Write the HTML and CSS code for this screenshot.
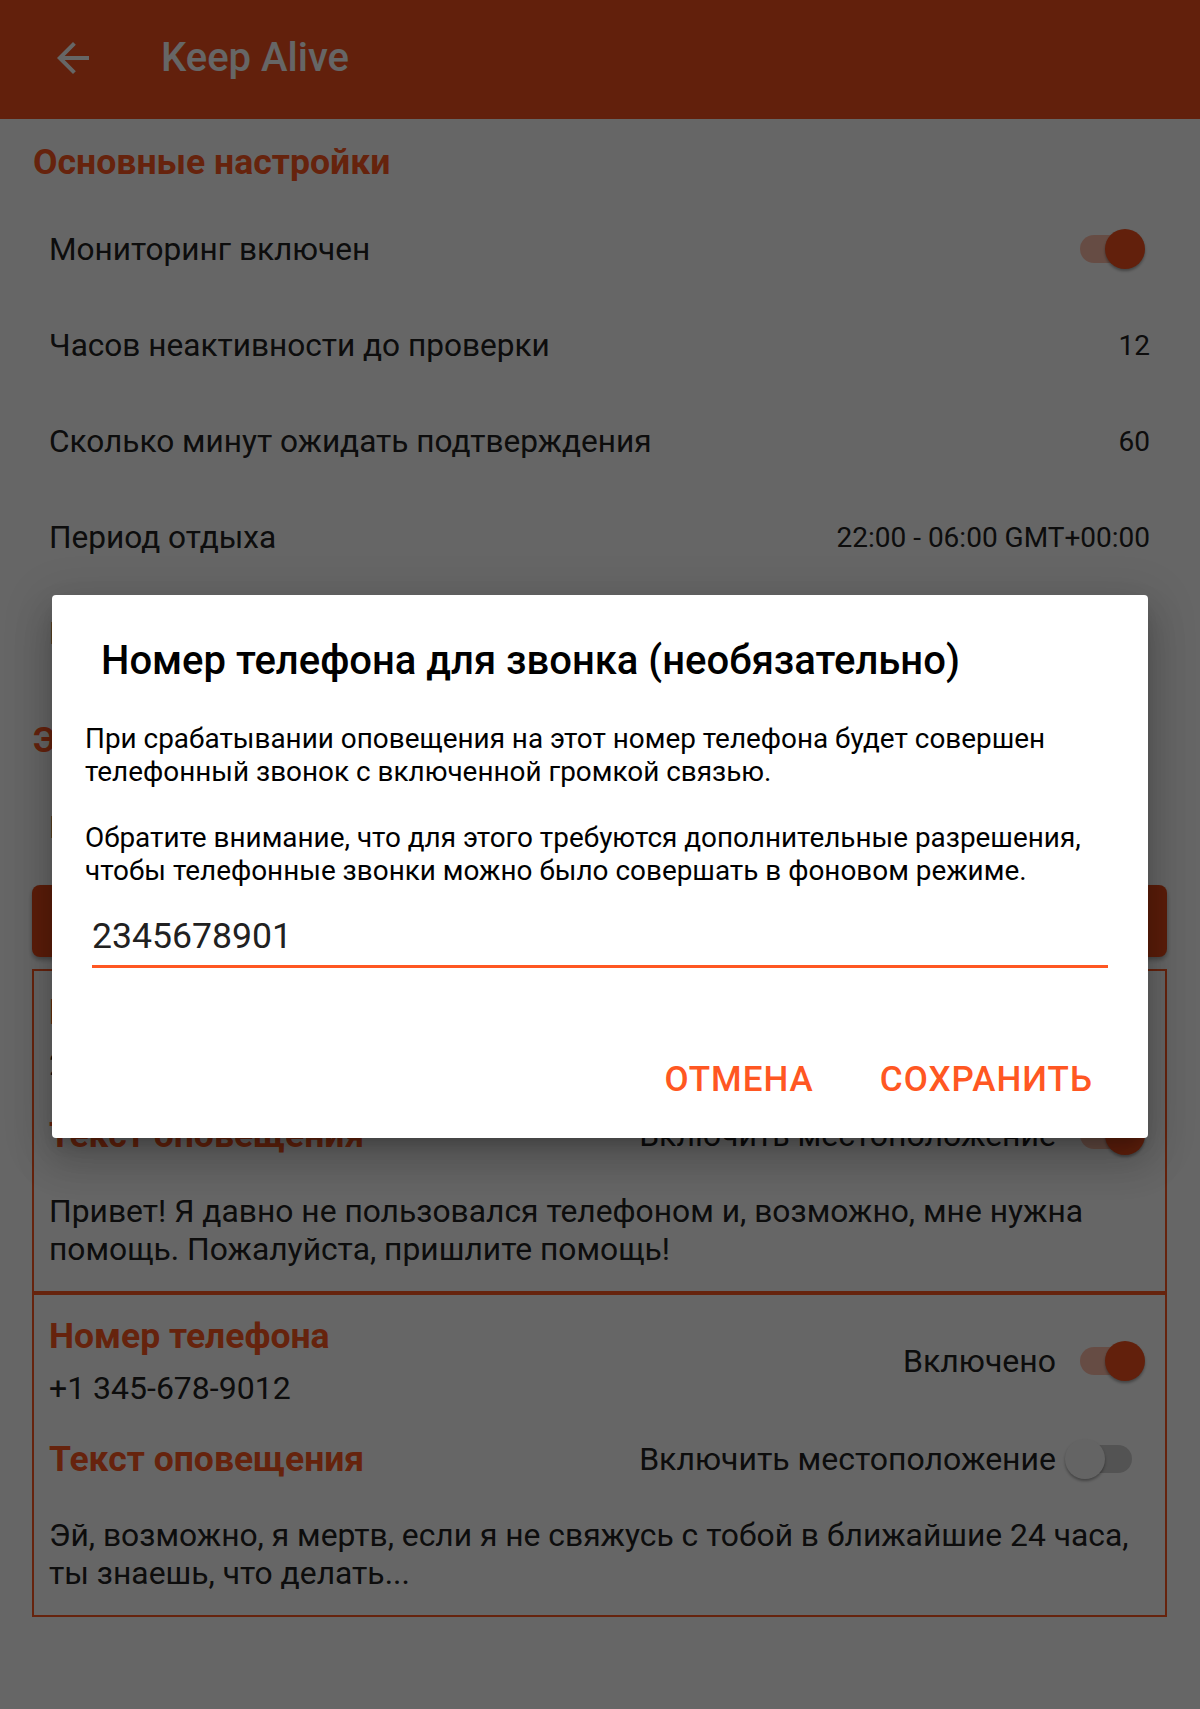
FILE: index.html
```html
<!DOCTYPE html>
<html lang="ru">
<head>
<meta charset="utf-8">
<title>Keep Alive</title>
<link rel="stylesheet" href="styles.css">
</head>
<body>
<div class="screen">
  <header class="appbar">
    <button class="back" aria-label="Назад">
      <svg viewBox="0 0 24 24" width="48" height="48"><path d="M20 11H7.83l5.59-5.59L12 4l-8 8 8 8 1.41-1.41L7.83 13H20v-2z"/></svg>
    </button>
    <h1 class="appbar-title">Keep Alive</h1>
  </header>

  <main class="content">
    <section class="group">
      <h2 class="group-title">Основные настройки</h2>
      <div class="pref">
        <span class="pref-label">Мониторинг включен</span>
        <span class="switch on"><span class="track"></span><span class="thumb"></span></span>
      </div>
      <div class="pref">
        <span class="pref-label">Часов неактивности до проверки</span>
        <span class="pref-value">12</span>
      </div>
      <div class="pref">
        <span class="pref-label">Сколько минут ожидать подтверждения</span>
        <span class="pref-value">60</span>
      </div>
      <div class="pref">
        <span class="pref-label">Период отдыха</span>
        <span class="pref-value">22:00 - 06:00 GMT+00:00</span>
      </div>
      <div class="pref">
        <span class="pref-label">Номер телефона для звонка (необязательно)</span>
      </div>
    </section>

    <section class="group group-next">
      <h2 class="group-title">Экстренные контакты</h2>
      <div class="pref">
        <span class="pref-label">Настроить веб-хук</span>
      </div>
    </section>

    <button class="add-btn">Добавить контакт</button>

    <div class="contacts">
      <article class="contact">
        <div class="contact-row">
          <div class="contact-main">
            <h3 class="contact-title">Номер телефона</h3>
            <div class="contact-phone">2345678901</div>
          </div>
          <div class="contact-toggle">
            <span class="toggle-label">Включено</span>
            <span class="switch on"><span class="track"></span><span class="thumb"></span></span>
          </div>
        </div>
        <div class="contact-row contact-row-msg">
          <h3 class="contact-title">Текст оповещения</h3>
          <div class="contact-toggle">
            <span class="toggle-label">Включить местоположение</span>
            <span class="switch on"><span class="track"></span><span class="thumb"></span></span>
          </div>
        </div>
        <p class="contact-text">Привет! Я давно не пользовался телефоном и, возможно, мне нужна помощь. Пожалуйста, пришлите помощь!</p>
      </article>

      <article class="contact">
        <div class="contact-row">
          <div class="contact-main">
            <h3 class="contact-title">Номер телефона</h3>
            <div class="contact-phone">+1 345-678-9012</div>
          </div>
          <div class="contact-toggle">
            <span class="toggle-label">Включено</span>
            <span class="switch on"><span class="track"></span><span class="thumb"></span></span>
          </div>
        </div>
        <div class="contact-row contact-row-msg">
          <h3 class="contact-title">Текст оповещения</h3>
          <div class="contact-toggle">
            <span class="toggle-label">Включить местоположение</span>
            <span class="switch"><span class="track"></span><span class="thumb"></span></span>
          </div>
        </div>
        <p class="contact-text">Эй, возможно, я мертв, если я не свяжусь с тобой в ближайшие 24 часа, ты знаешь, что делать...</p>
      </article>
    </div>
  </main>

  <div class="scrim"></div>

  <div class="dialog" role="dialog">
    <h2 class="dialog-title">Номер телефона для звонка (необязательно)</h2>
    <div class="dialog-body">
      <p>При срабатывании оповещения на этот номер телефона будет совершен телефонный звонок с включенной громкой связью.</p>
      <p>Обратите внимание, что для этого требуются дополнительные разрешения, чтобы телефонные звонки можно было совершать в фоновом режиме.</p>
    </div>
    <input class="dialog-input" type="tel" value="2345678901">
    <div class="dialog-actions">
      <button class="dialog-btn">Отмена</button>
      <button class="dialog-btn">Сохранить</button>
    </div>
  </div>
</div>
</body>
</html>
```

FILE: styles.css
```css
* { box-sizing: border-box; }

body {
  margin: 0;
  background: #ffffff;
  font-family: Roboto, "Noto Sans", sans-serif;
}

.screen {
  position: relative;
  width: 1200px;
  height: 1709px;
  overflow: hidden;
  background: #ffffff;
}

/* App bar */
.appbar {
  height: 119px;
  background: #F4511E;
  display: flex;
  align-items: center;
  padding: 0 0 4px 49px;
}

.back {
  width: 48px;
  height: 48px;
  padding: 0;
  margin: 0 64px 0 0;
  border: 0;
  background: none;
  display: flex;
}

.back svg { fill: #ffffff; }

.appbar-title {
  margin: 0;
  font-size: 40px;
  font-weight: 500;
  line-height: 48px;
  color: #ffffff;
}

/* Settings */
.group-title {
  margin: 0;
  padding: 21px 0 17px 33px;
  font-size: 35.6px;
  font-weight: 700;
  line-height: 44px;
  color: #FF5722;
}

.group-next { margin-top: 16px; }

.pref {
  height: 96px;
  display: flex;
  align-items: center;
  justify-content: space-between;
  padding: 0 50px 0 49px;
}

.pref-label {
  font-size: 31.6px;
  color: #212121;
}

.pref-value {
  font-size: 28px;
  color: #212121;
}

/* Switch */
.switch {
  position: relative;
  width: 80px;
  height: 40px;
  flex: none;
}

.pref .switch { margin-right: 5px; }

.switch .track {
  position: absolute;
  left: 15px;
  top: 6px;
  width: 52px;
  height: 28px;
  border-radius: 14px;
  background: #CFCFCF;
}

.switch .thumb {
  position: absolute;
  left: 0;
  top: 0;
  width: 40px;
  height: 40px;
  border-radius: 50%;
  background: #FAFAFA;
  box-shadow: 0 2px 3px rgba(0, 0, 0, 0.35);
}

.switch.on .track { background: #FFBFAB; }
.switch.on .thumb { left: 40px; background: #F4511E; }

/* Add button */
.add-btn {
  display: block;
  width: calc(100% - 65px);
  height: 72px;
  margin: 10px 33px 0 32px;
  border: 0;
  border-radius: 8px;
  background: #E64A19;
  color: #ffffff;
  font-family: inherit;
  font-size: 32px;
  font-weight: 500;
  text-transform: uppercase;
  box-shadow: 0 3px 4px rgba(0, 0, 0, 0.3);
}

/* Contacts */
.contacts {
  margin: 12px 33px 0 32px;
}

.contact {
  border: 2px solid #FF5722;
  padding: 19px 20px 23px 15px;
}

.contact-row {
  display: flex;
  align-items: center;
  justify-content: space-between;
}

.contact-row-msg { margin-top: 29px; }

.contact-title {
  margin: 0;
  font-size: 35.5px;
  font-weight: 700;
  line-height: 44px;
  color: #FF5722;
}

.contact-phone {
  margin-top: 10px;
  font-size: 32px;
  line-height: 40px;
  color: #212121;
}

.contact-toggle {
  display: flex;
  align-items: center;
  gap: 9px;
}

.toggle-label {
  font-size: 32px;
  color: #212121;
}

.contact-text {
  margin: 35px 0 0;
  font-size: 31.8px;
  line-height: 38px;
  color: #212121;
}

/* Scrim + dialog */
.scrim {
  position: absolute;
  inset: 0;
  background: rgba(0, 0, 0, 0.6);
}

.dialog {
  position: absolute;
  left: 52px;
  top: 595px;
  width: 1096px;
  height: 543px;
  background: #ffffff;
  border-radius: 4px;
  display: flex;
  flex-direction: column;
  box-shadow: 0 11px 15px -7px rgba(0, 0, 0, 0.2), 0 24px 38px 3px rgba(0, 0, 0, 0.14), 0 9px 46px 8px rgba(0, 0, 0, 0.12);
}

.dialog-title {
  margin: 42px 0 0 49px;
  font-size: 40px;
  font-weight: 500;
  line-height: 48px;
  color: #000000;
}

.dialog-body {
  margin: 37px 33px 0;
  font-size: 27.9px;
  line-height: 33px;
  color: #000000;
}

.dialog-body p { margin: 0; }
.dialog-body p + p { margin-top: 33px; }

.dialog-input {
  display: block;
  width: 1016px;
  height: 53px;
  margin: 28px 40px 0;
  padding: 0 0 8px;
  border: 0;
  border-bottom: 3px solid #FF5722;
  outline: none;
  background: transparent;
  font-family: inherit;
  font-size: 35.6px;
  line-height: 42px;
  color: #212121;
}

.dialog-actions {
  margin-top: auto;
  height: 72px;
  display: flex;
  align-items: center;
  justify-content: flex-end;
  gap: 66px;
  padding: 0 55px 0 0;
  margin-bottom: 23px;
}

.dialog-btn {
  padding: 0;
  border: 0;
  background: none;
  font-family: inherit;
  font-size: 35px;
  font-weight: 500;
  letter-spacing: 1px;
  text-transform: uppercase;
  color: #FF5722;
}
```
